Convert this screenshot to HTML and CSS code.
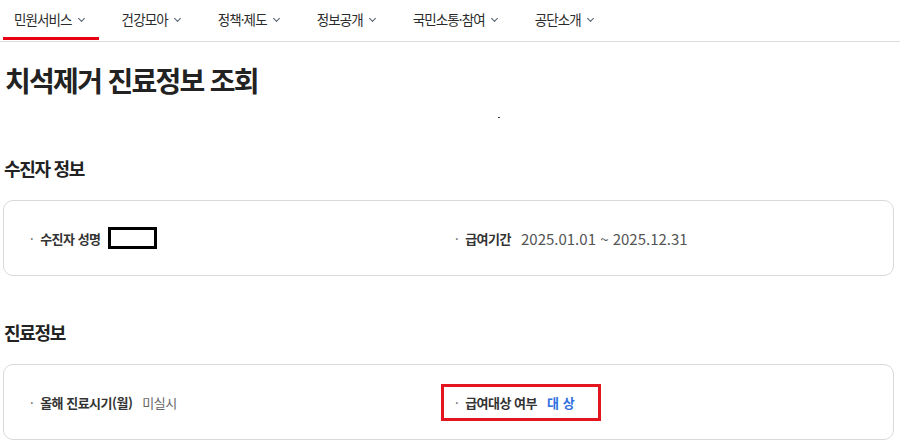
FILE: index.html
```html
<!DOCTYPE html>
<html lang="ko">
<head>
  <meta charset="utf-8">
  <meta name="viewport" content="width=device-width">
  <title>치석제거 진료정보 조회</title>
  <link rel="stylesheet" href="styles.css">
</head>
<body>

  <nav class="gnb">
    <a class="gnb-item active" href="#">민원서비스<span class="chev"></span></a>
    <a class="gnb-item" href="#">건강모아<span class="chev"></span></a>
    <a class="gnb-item" href="#">정책·제도<span class="chev"></span></a>
    <a class="gnb-item" href="#">정보공개<span class="chev"></span></a>
    <a class="gnb-item" href="#">국민소통·참여<span class="chev"></span></a>
    <a class="gnb-item" href="#">공단소개<span class="chev"></span></a>
  </nav>

  <main class="content">
    <h1 class="page-title">치석제거 진료정보 조회</h1>
    <div class="spacer"><span class="dot"></span></div>

    <h2 class="sec-title">수진자 정보</h2>
    <div class="info-box">
      <div class="info-item">
        <span class="label">수진자 성명</span>
        <span class="masked"></span>
      </div>
      <div class="info-item">
        <span class="label">급여기간</span>
        <span class="value date">2025.01.01 ~ 2025.12.31</span>
      </div>
    </div>

    <h2 class="sec-title">진료정보</h2>
    <div class="info-box">
      <div class="info-item">
        <span class="label">올해 진료시기(월)</span>
        <span class="value">미실시</span>
      </div>
      <div class="info-item">
        <div class="highlight">
          <span class="label">급여대상 여부</span>
          <span class="value blue">대 상</span>
        </div>
      </div>
    </div>
  </main>

</body>
</html>
```

FILE: styles.css
```css
html, body {
  margin: 0;
  padding: 0;
  background: #fff;
  color: #222;
  font-family: "Noto Sans CJK KR", "Noto Sans", sans-serif;
}

* {
  box-sizing: border-box;
}

/* top menu */
.gnb {
  display: flex;
  gap: 12px;
  height: 42px;
  padding-left: 3px;
  border-bottom: 1px solid #ddd;
}

.gnb-item {
  display: flex;
  align-items: center;
  gap: 7px;
  height: 40px;
  padding: 0 15px 0 11px;
  font-size: 13.5px;
  letter-spacing: -0.9px;
  color: #2b2b2b;
  text-decoration: none;
  border-bottom: 3px solid transparent;
}

.gnb-item.active {
  border-bottom-color: #e60012;
}

.chev {
  width: 5px;
  height: 5px;
  border-right: 1px solid #4f5a6e;
  border-bottom: 1px solid #4f5a6e;
  transform: rotate(45deg);
  margin: 0 0 1px 0;
}

/* content */
.content {
  padding: 0 6px 0 3px;
}

.page-title {
  margin: 18px 0 0 2px;
  font-size: 28px;
  font-weight: 700;
  letter-spacing: -1.7px;
  line-height: 40px;
}

.spacer {
  height: 55px;
  position: relative;
}

.dot {
  position: absolute;
  left: 495px;
  top: 17px;
  width: 2px;
  height: 1px;
  background: #333;
}

.sec-title {
  margin: 0 0 19px 1px;
  font-size: 18px;
  font-weight: 700;
  line-height: 26px;
  letter-spacing: -1.3px;
}

.info-box {
  display: flex;
  height: 76px;
  border: 1px solid #d9d9d9;
  border-radius: 10px;
  margin-bottom: 43px;
}

.info-box:last-child {
  margin-bottom: 0;
}

.info-item {
  display: flex;
  align-items: center;
  gap: 10px;
  font-size: 13px;
}

.info-item:first-child {
  flex: 0 0 424px;
  padding-left: 26px;
}

.info-item + .info-item {
  flex: 1;
  padding-left: 13px;
}

.info-item + .info-item > .label {
  margin-left: 14px;
}

.label {
  font-weight: 700;
  color: #333;
  letter-spacing: -0.5px;
}

.label::before {
  content: "·";
  font-weight: 400;
  margin-right: 7px;
  color: #555;
}

.value {
  color: #666;
  font-size: 13px;
  letter-spacing: -0.5px;
}

.date {
  color: #555;
  font-size: 15px;
  letter-spacing: 0;
}

.blue {
  color: #2f6fe0;
  font-weight: 700;
  letter-spacing: 0;
}

.masked {
  width: 49px;
  height: 22px;
  margin-left: -3px;
  border: 3px solid #000;
}

.highlight {
  display: flex;
  align-items: center;
  gap: 10px;
  height: 37px;
  width: 160px;
  padding-left: 11px;
  border: 3px solid #e3151f;
}
```
